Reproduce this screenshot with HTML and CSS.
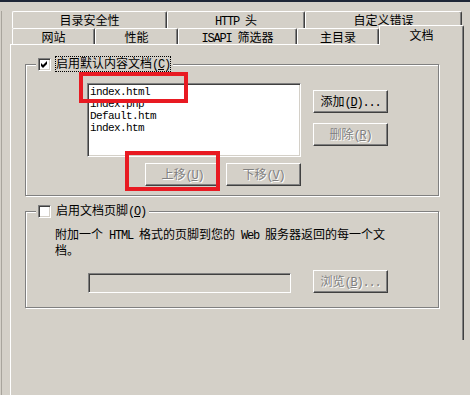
FILE: index.html
```html
<!DOCTYPE html>
<html lang="zh-CN">
<head>
    <meta charset="UTF-8">
    <title>文档</title>
    <link rel="stylesheet" href="styles.css">
</head>
<body>
    <div class="topline"></div>
    <div class="outer">
        <!-- two rows of property tabs -->
        <div class="tab-row back">
            <div class="tab">目录安全性</div>
            <div class="tab"><span class="en">HTTP </span>头</div>
            <div class="tab">自定义错误</div>
        </div>
        <div class="tab-row front">
            <div class="tab">网站</div>
            <div class="tab">性能</div>
            <div class="tab"><span class="en">ISAPI </span>筛选器</div>
            <div class="tab">主目录</div>
            <div class="tab active">文档</div>
        </div>

        <div class="panel">
            <fieldset class="group">
                <legend>
                    <span class="check">
                        <svg width="7" height="7" viewBox="0 0 7 7"><polygon points="0,2 2,4 6,0 6,3 2,7 0,5" fill="#000"/></svg>
                    </span>
                    <span class="caption focus">启用默认内容文档<span class="en">(<u>C</u>)</span></span>
                </legend>
                <div class="doc-body">
                    <div class="list-col">
                        <div class="listbox">
                            <div>index.html</div>
                            <div>index.php</div>
                            <div>Default.htm</div>
                            <div>index.htm</div>
                        </div>
                        <div class="move-row">
                            <button class="btn off">上移<span class="en">(<u>U</u>)</span></button>
                            <button class="btn off">下移<span class="en">(<u>V</u>)</span></button>
                        </div>
                    </div>
                    <div class="side-btns">
                        <button class="btn">添加<span class="en">(<u>D</u>)...</span></button>
                        <button class="btn off">删除<span class="en">(<u>R</u>)</span></button>
                    </div>
                </div>
            </fieldset>

            <fieldset class="group">
                <legend>
                    <span class="check"></span>
                    <span class="caption">启用文档页脚<span class="en">(<u>O</u>)</span></span>
                </legend>
                <div class="footer-body">
                    <div class="footer-text">附加一个<span class="en"> HTML </span>格式的页脚到您的<span class="en"> Web </span>服务器返回的每一个文<br>档。</div>
                    <div class="browse-row">
                        <input class="path-input" type="text" disabled>
                        <button class="btn off">浏览<span class="en">(<u>B</u>)...</span></button>
                    </div>
                </div>
            </fieldset>
        </div>
        <div class="panel-tail"></div>
    </div>

    <!-- red annotation boxes -->
    <div class="mark mark-list"></div>
    <div class="mark mark-up"></div>
</body>
</html>
```

FILE: styles.css
```css
body {
    margin: 0;
    position: relative;
    height: 395px;
    overflow: hidden;
    background: #d4d0c8;
    color: #000;
    font-family: "Noto Sans CJK SC", sans-serif;
    font-size: 12px;
    line-height: 13px;
}
.topline {
    height: 2px;
    background: #1e2637;
}
.outer {
    margin-left: 1px;
    border-left: 1px solid #a8a49c;
    padding-left: 8px;
}
.en {
    font-family: "Liberation Mono", monospace;
    font-size: 12px;
    letter-spacing: -1.2px;
}

/* tabs */
.tab-row {
    display: flex;
    margin-left: 2px;
}
.tab-row.back {
    margin-top: 9px;
    height: 17px;
}
.tab-row.front {
    margin-top: -3px;
    height: 19px;
    align-items: flex-end;
}
.tab {
    box-sizing: border-box;
    height: 100%;
    border: 1px solid;
    border-color: #fff #404040 transparent #fff;
    border-bottom: 0;
    border-radius: 2px 2px 0 0;
    box-shadow: inset -1px 0 #808080;
    background: #d4d0c8;
    text-align: center;
    line-height: 15px;
    white-space: pre;
}
.back .tab:nth-child(1) { width: 155px; }
.back .tab:nth-child(2) { width: 138px; }
.back .tab:nth-child(3) { width: 157px; }
.front .tab { height: 16px; }
.front .tab:nth-child(1) { width: 83px; }
.front .tab:nth-child(2) { width: 83px; }
.front .tab:nth-child(3) { width: 119px; }
.front .tab:nth-child(4) { width: 82px; }
.front .tab.active {
    width: 85px;
    height: 20px;
    margin-bottom: -1px;
    position: relative;
    z-index: 1;
    line-height: 18px;
}

/* page body */
.panel {
    box-sizing: border-box;
    width: 454px;
    height: 296px;
    border: 1px solid;
    border-color: #fff #404040 transparent #fff;
    border-bottom: 0;
    box-shadow: inset -1px 0 #808080;
    padding-top: 12px;
}
.panel-tail {
    height: 60px;
    border-left: 1px solid #fff;
}

.group {
    box-sizing: border-box;
    width: 414px;
    min-inline-size: 0;
    margin: 0 0 0 14px;
    padding: 0;
    border: 1px solid #808080;
    box-shadow: inset 1px 1px #fff, 1px 1px #fff;
}
.group + .group {
    margin-top: 8px;
}
.group legend {
    margin-left: 10px;
    padding: 0 2px;
    height: 14px;
    display: flex;
    align-items: center;
    gap: 4px;
    background: #d4d0c8;
}
.check {
    box-sizing: border-box;
    width: 13px;
    height: 13px;
    background: #fff;
    border: 1px solid;
    border-color: #808080 #fff #fff #808080;
    box-shadow: inset 1px 1px #404040, inset -1px -1px #d4d0c8;
    display: flex;
    align-items: center;
    justify-content: center;
}
.caption {
    line-height: 12px;
    border: 1px solid transparent;
    white-space: nowrap;
}
.caption.focus {
    border: 1px dotted #000;
}

.doc-body {
    display: flex;
    margin: 12px 0 9px 61px;
}
.list-col {
    width: 214px;
}
.listbox {
    box-sizing: border-box;
    height: 74px;
    padding: 2px;
    background: #fff;
    border: 1px solid;
    border-color: #808080 #fff #fff #808080;
    box-shadow: inset 1px 1px #404040, inset -1px -1px #d4d0c8;
    font-family: "Liberation Mono", monospace;
    font-size: 11px;
    line-height: 12px;
    letter-spacing: -0.6px;
}
.move-row {
    display: flex;
    justify-content: flex-end;
    gap: 6px;
    margin-top: 6px;
}
.side-btns {
    display: flex;
    flex-direction: column;
    gap: 10px;
    margin-left: 12px;
    padding-top: 7px;
}

.btn {
    box-sizing: border-box;
    width: 75px;
    height: 23px;
    padding: 0;
    border: 1px solid;
    border-color: #fff #404040 #404040 #fff;
    box-shadow: inset -1px -1px #808080;
    background: #d4d0c8;
    color: #000;
    font: inherit;
    text-align: center;
    line-height: 19px;
    white-space: nowrap;
}
.btn.off {
    color: #808080;
    text-shadow: 1px 1px #fff;
}

.footer-body {
    margin: 9px 0 14px 29px;
}
.browse-row {
    display: flex;
    align-items: flex-start;
    margin: 14px 0 0 33px;
}
.path-input {
    box-sizing: border-box;
    width: 203px;
    height: 20px;
    margin: 3px 0 0;
    padding: 0;
    background: #d4d0c8;
    border: 1px solid;
    border-color: #808080 #fff #fff #808080;
    box-shadow: inset 1px 1px #404040, inset -1px -1px #d4d0c8;
}
.browse-row .btn {
    margin-left: 22px;
}

/* annotations drawn over the dialog */
.mark {
    position: absolute;
    box-sizing: border-box;
    border: 4px solid #e81a22;
}
.mark-list {
    left: 79px;
    top: 72px;
    width: 109px;
    height: 31px;
}
.mark-up {
    left: 125px;
    top: 151px;
    width: 95px;
    height: 40px;
}
```
